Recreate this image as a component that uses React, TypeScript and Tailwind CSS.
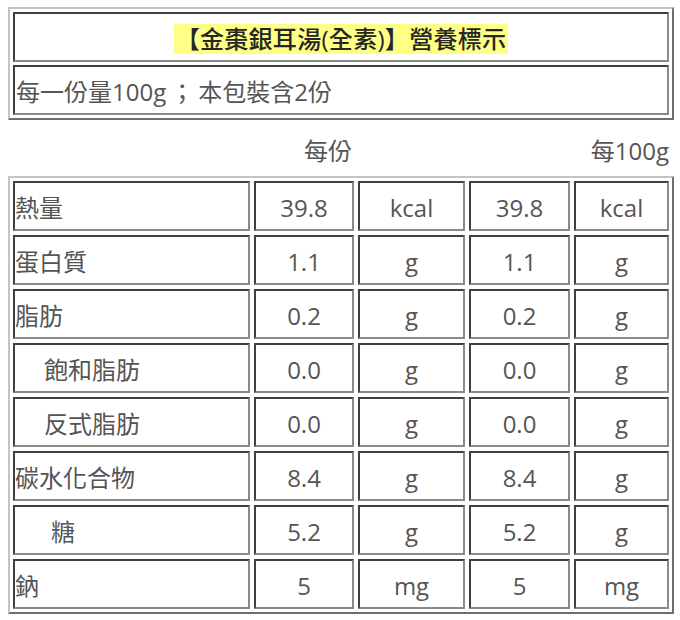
const rows = [
  { name: '熱量', indent: '', a: '39.8', u: 'kcal', b: '39.8' },
  { name: '蛋白質', indent: '', a: '1.1', u: 'g', b: '1.1' },
  { name: '脂肪', indent: '', a: '0.2', u: 'g', b: '0.2' },
  { name: '飽和脂肪', indent: 'pl-[29px]', a: '0.0', u: 'g', b: '0.0' },
  { name: '反式脂肪', indent: 'pl-[29px]', a: '0.0', u: 'g', b: '0.0' },
  { name: '碳水化合物', indent: '', a: '8.4', u: 'g', b: '8.4' },
  { name: '糖', indent: 'pl-[36px]', a: '5.2', u: 'g', b: '5.2' },
  { name: '鈉', indent: '', a: '5', u: 'mg', b: '5' },
];

const cell =
  'h-[50px] flex items-center pt-[3px] border-2 border-t-[#3f3f3f] border-l-[#3f3f3f] border-r-[#8a8a8a] border-b-[#8a8a8a] bg-white';
const outer =
  'border-2 border-t-[#c4c4c4] border-l-[#c4c4c4] border-r-[#6e6e6e] border-b-[#6e6e6e] p-[3px]';
const cols = 'grid grid-cols-[237px_100px_107px_101px_95px] gap-[4px]';

export default function App() {
  return (
    <div
      className="w-[680px] h-[620px] bg-white px-[8px] pt-[7px] text-[24px] leading-[30px] text-[#555555]"
      style={{ fontFamily: '"Open Sans", "Noto Sans CJK TC", sans-serif' }}
    >
      <div className={`${outer} w-[666px] flex flex-col gap-[3px]`}>
        <div className={`${cell} justify-center`}>
          <span className="bg-[#ffff85] text-[#262626] font-medium px-[2px] tracking-[0.3px]">
            【金棗銀耳湯(全素)】營養標示
          </span>
        </div>
        <div className={`${cell} pl-[1px]`}>
          每一份量100g<span className="px-[4px]">；</span>本包裝含2份
        </div>
      </div>

      <div className={`${cols} h-[56px] px-[5px] items-center pt-[6px]`}>
        <div className="col-span-2 text-right pr-[2px]">每份</div>
        <div className="col-span-3 text-right">每100g</div>
      </div>

      <div className={`${outer} w-[666px]`}>
        <div className={`${cols} gap-y-[4px]`}>
          {rows.map((r) => (
            <div key={r.name} className="contents">
              <div className={`${cell} ${r.indent}`}>{r.name}</div>
              <div className={`${cell} justify-center`}>{r.a}</div>
              <div className={`${cell} justify-center`}>{r.u}</div>
              <div className={`${cell} justify-center`}>{r.b}</div>
              <div className={`${cell} justify-center`}>{r.u}</div>
            </div>
          ))}
        </div>
      </div>
    </div>
  );
}
